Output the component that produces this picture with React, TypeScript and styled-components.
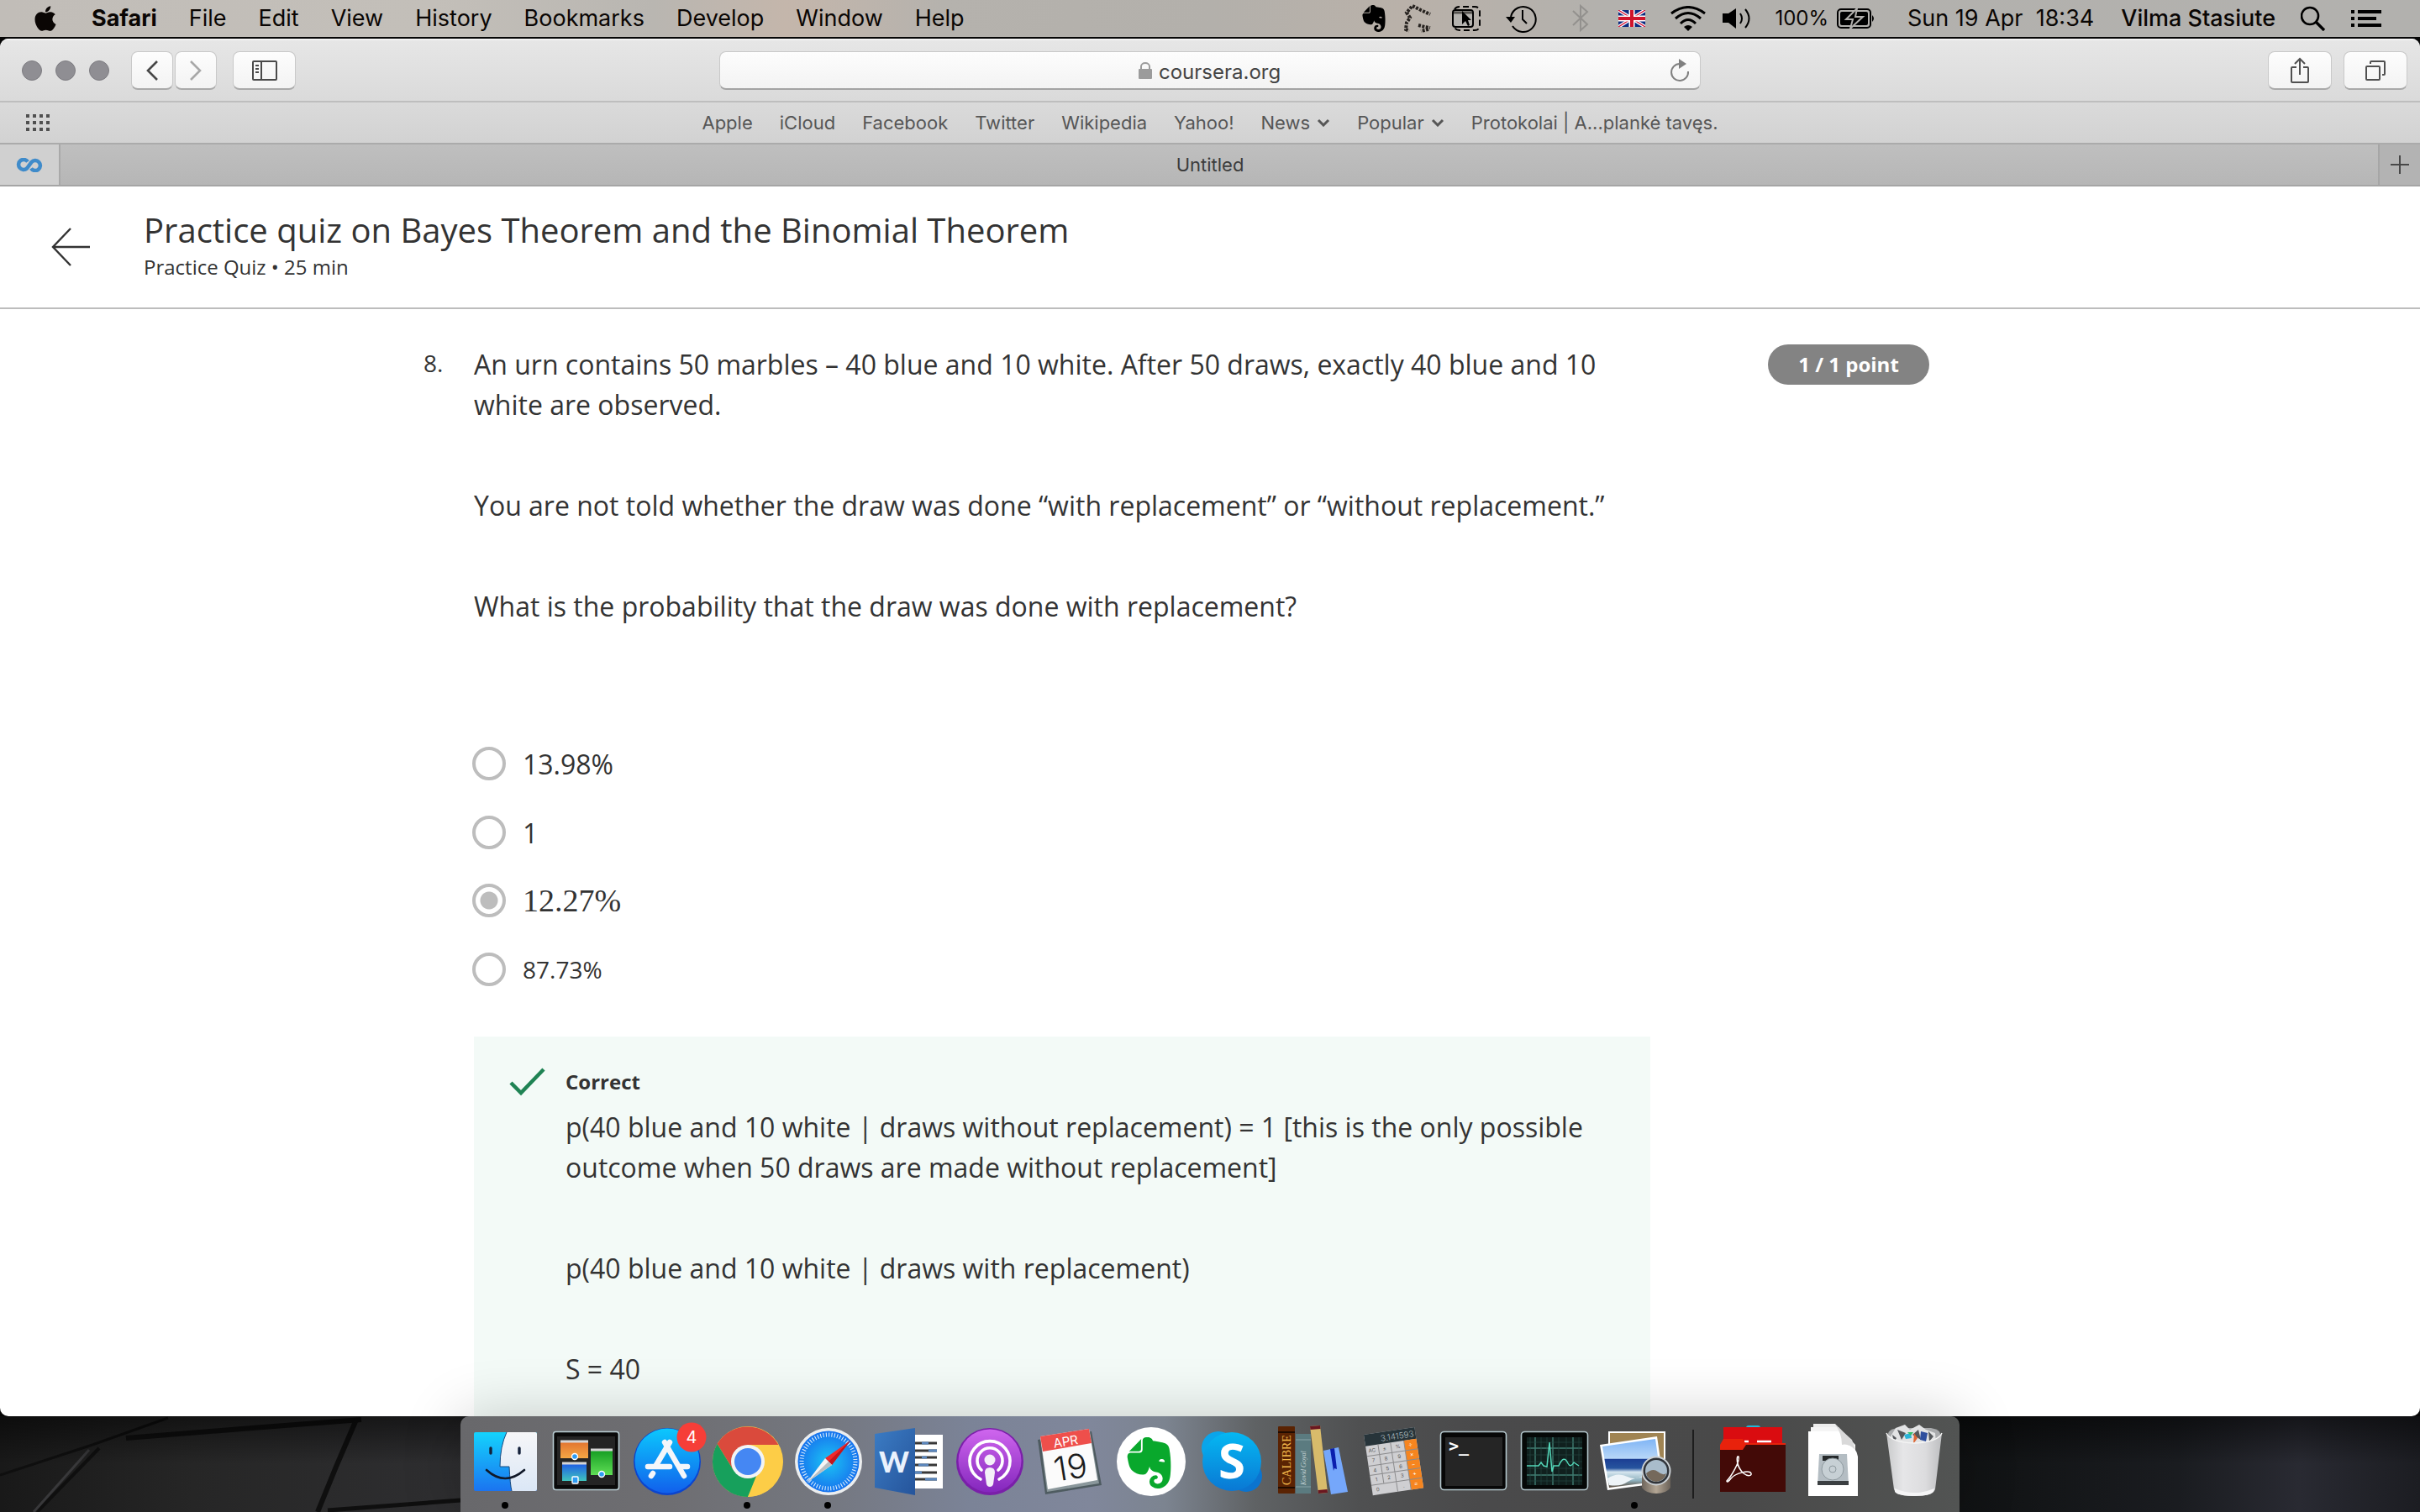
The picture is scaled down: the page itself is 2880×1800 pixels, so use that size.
import React from "react";
import styled, { createGlobalStyle } from "styled-components";
import { FaApple } from "react-icons/fa";
import { SiEvernote } from "react-icons/si";

const GlobalStyle = createGlobalStyle`
  * { box-sizing: border-box; }
  html, body, #root { height: 100%; }
  body { margin: 0; background: #0b0b0c; overflow: hidden; }
  button { font: inherit; color: inherit; padding: 0; margin: 0; border: 0; background: none; }
  h1, p, ol, ul { margin: 0; padding: 0; font-weight: 400; }
  a { color: inherit; text-decoration: none; }
  svg { display: block; flex: none; }
`;

const uiFont = `Inter, "Liberation Sans", sans-serif`;
const pageFont = `"Open Sans", "Noto Sans", sans-serif`;

const Desktop = styled.div`
  display: flex;
  flex-direction: column;
  height: 100vh;
  font-family: ${uiFont};
  background: #060606;
`;

/* ---------- menu bar ---------- */

const MenuBar = styled.header`
  display: flex;
  justify-content: space-between;
  align-items: center;
  flex: none;
  height: 44px;
  padding: 0 46px 0 37px;
  margin-bottom: 2px;
  font-size: 27px;
  line-height: 44px;
  color: #0a0604;
  background: linear-gradient(90deg, #c1bdb8 0%, #c3bfb9 18%, #b9b6b1 27%, #c4b6ab 32.5%, #b5b2ad 39%, #b3b0ab 50%, #b9b1a9 58%, #b3b1ad 66%, #b2b1ae 100%);
`;

const MenuGroup = styled.nav`
  display: flex;
  align-items: center;
`;

const AppMenus = styled(MenuGroup)`
  gap: 38px;
`;

const MenuItem = styled.button<{ $bold?: boolean }>`
  height: 44px;
  line-height: 44px;
  font-weight: ${(p) => (p.$bold ? 700 : 400)};
`;

const StatusItem = styled.button<{ $gap: number; $strong?: boolean }>`
  display: flex;
  align-items: center;
  gap: 10px;
  height: 44px;
  line-height: 44px;
  white-space: pre;
  margin-left: ${(p) => p.$gap}px;
  font-weight: ${(p) => (p.$strong ? 500 : 400)};
`;

const Charge = styled.span`
  font-size: 24px;
`;

/* ---------- browser window ---------- */

const Window = styled.main`
  display: flex;
  flex-direction: column;
  flex: 1;
  min-height: 0;
  overflow: hidden;
  border-radius: 10px;
  background: #fff;
`;

const Toolbar = styled.div`
  display: grid;
  grid-template-columns: 1fr 41% 1fr;
  align-items: center;
  flex: none;
  height: 76px;
  padding: 0 15px;
  border-top: 2px solid #f4f4f4;
  border-bottom: 2px solid #bebebe;
  background: linear-gradient(#e6e6e6, #dadada);
`;

const ToolbarSide = styled.div<{ $end?: boolean }>`
  display: flex;
  align-items: center;
  justify-content: ${(p) => (p.$end ? "flex-end" : "flex-start")};
  gap: ${(p) => (p.$end ? 14 : 19)}px;
`;

const Lights = styled.div`
  display: flex;
  gap: 16px;
  margin: 0 7px 0 11px;
`;

const Light = styled.button`
  width: 24px;
  height: 24px;
  border-radius: 50%;
  border: 1px solid #7d7c81;
  background: #8f8e93;
`;

const NavPair = styled.div`
  display: flex;
  gap: 2px;
`;

const ToolButton = styled.button<{ $w: number }>`
  display: flex;
  align-items: center;
  justify-content: center;
  width: ${(p) => p.$w}px;
  height: 46px;
  border-radius: 8px;
  border: 1px solid #c9c9c9;
  border-bottom: 2px solid #a9a9a9;
  background: linear-gradient(#fdfdfd, #f3f3f3);
`;

const AddressBar = styled.div`
  display: grid;
  grid-template-columns: 1fr auto 1fr;
  align-items: center;
  height: 46px;
  padding: 0 12px;
  border-radius: 8px;
  border: 1px solid #c9c9c9;
  border-bottom: 2px solid #a3a3a3;
  background: linear-gradient(#fdfdfd, #f3f3f3);
`;

const Address = styled.label`
  display: flex;
  align-items: center;
  grid-column: 2;
  gap: 8px;
`;

const AddressInput = styled.input`
  width: 146px;
  height: 36px;
  padding: 4px 0 0;
  border: 0;
  background: none;
  color: #444;
  font: 400 24px/32px ${uiFont};
  outline: 0;
`;

const Reload = styled.button`
  justify-self: end;
`;

const Bookmarks = styled.nav`
  display: grid;
  grid-template-columns: 1fr auto 1fr;
  align-items: center;
  flex: none;
  height: 50px;
  padding: 0 30px;
  border-bottom: 2px solid #ababab;
  background: linear-gradient(#dadada, #d2d2d2);
  color: #565656;
  font-size: 22px;
  line-height: 28px;
`;

const BookmarkList = styled.ul`
  display: flex;
  gap: 32px;
  list-style: none;
`;

const BookmarkLink = styled.a`
  display: flex;
  align-items: center;
  gap: 8px;
`;

const Tabs = styled.div`
  display: flex;
  flex: none;
  height: 50px;
  border-bottom: 2px solid #a5a5a5;
  background: linear-gradient(#bfbfbf, #b6b6b6);
  color: #3c3c3c;
  font-size: 22px;
`;

const PinnedTab = styled.button`
  display: flex;
  align-items: center;
  justify-content: center;
  width: 72px;
  border-right: 2px solid #a9a9a9;
  background: #d0d0d0;
`;

const ActiveTab = styled.button`
  flex: 1;
  padding-right: 22px;
  text-align: center;
`;

const NewTab = styled(PinnedTab)`
  width: 50px;
  border-right: 0;
  border-left: 2px solid #a6a6a6;
  background: #b3b3b3;
`;

/* ---------- quiz page ---------- */

const QuizHeader = styled.header`
  display: flex;
  align-items: center;
  flex: none;
  gap: 64px;
  height: 146px;
  padding: 0 61px;
  border-bottom: 2px solid #bdbdbd;
  color: #333;
  font-family: ${pageFont};
`;

const QuizHeading = styled.div`
  padding-bottom: 4px;
`;

const QuizTitle = styled.h1`
  font-size: 40px;
  line-height: 52px;
`;

const QuizMeta = styled.p`
  font-size: 24px;
  line-height: 36px;
`;

const Scroll = styled.section`
  display: flex;
  justify-content: center;
  flex: 1;
  min-height: 0;
  overflow: hidden;
  padding: 42px 80px 0 0;
  color: #333;
  font-family: ${pageFont};
  font-size: 32px;
  line-height: 48px;
`;

const QuizColumn = styled.div`
  display: flex;
  align-items: flex-start;
  width: 1792px;
`;

const QuestionNumber = styled.div`
  width: 60px;
  font-size: 28px;
  line-height: 44px;
`;

const Question = styled.div`
  width: 1400px;
  flex: none;
`;

const Paragraphs = styled.div`
  display: flex;
  flex-direction: column;
  gap: 72px;
`;

const Options = styled.ul`
  display: flex;
  flex-direction: column;
  gap: 34px;
  padding: 140px 0 54px;
  list-style: none;
`;

const Option = styled.label<{ $kind?: "math" | "small" }>`
  display: flex;
  align-items: center;
  gap: 20px;
  height: 48px;
  margin-left: -2px;
  font-family: ${(p) => (p.$kind === "math" ? `"Liberation Serif", serif` : pageFont)};
  font-size: ${(p) => (p.$kind === "math" ? 38 : p.$kind === "small" ? 28 : 32)}px;
  line-height: ${(p) => (p.$kind ? 44 : 48)}px;
  align-items: ${(p) => (p.$kind ? "flex-start" : "center")};
`;

const Radio = styled.input`
  appearance: none;
  width: 40px;
  height: 40px;
  margin: 2px 0 4px;
  border: 4px solid #bdbdbd;
  border-radius: 50%;
  background: #fff;
  &:checked {
    background: radial-gradient(circle, #bdbdbd 10px, #fff 11px);
  }
`;

const Feedback = styled.div`
  display: flex;
  gap: 24px;
  padding: 36px 40px 0 42px;
  min-height: 600px;
  background: #f3faf7;
`;

const FeedbackBody = styled.div`
  flex: 1;
`;

const Verdict = styled.div`
  font-size: 24px;
  font-weight: 700;
  line-height: 36px;
  margin-bottom: 12px;
`;

const Score = styled.div`
  width: 192px;
  height: 48px;
  margin-left: auto;
  border-radius: 24px;
  background: #838383;
  color: #fff;
  font-size: 24px;
  font-weight: 700;
  line-height: 48px;
  text-align: center;
`;

/* ---------- dock ---------- */

const DockArea = styled.footer`
  position: relative;
  display: flex;
  justify-content: center;
  flex: none;
  height: 114px;
`;

const Wall = styled.svg`
  position: absolute;
  inset: 0;
  width: 100%;
  height: 100%;
`;

const Dock = styled.div`
  position: relative;
  display: flex;
  align-items: stretch;
  padding: 0 6px 0 5px;
  border-radius: 10px 10px 0 0;
  box-shadow: 0 0 70px rgba(0, 0, 0, 0.2);
  background: linear-gradient(90deg, #68686b 0%, #6e6e72 14%, #74777f 24%, #7b8397 34%, #80879b 42%, #7c8490 47%, #5f6264 53%, #4f5051 60%, #4a4a4b 68%, #494949 85%, #525453 100%);
`;

const DockItem = styled.button`
  display: flex;
  flex-direction: column;
  align-items: center;
  width: 96px;
  padding-top: 6px;
`;

const RunningDot = styled.span`
  width: 8px;
  height: 8px;
  border-radius: 50%;
  background: #000;
`;

const DockDivider = styled.div`
  width: 45px;
  padding: 16px 21px;
  &::before {
    content: "";
    display: block;
    width: 2px;
    height: 82px;
    background: #1d1d1d;
  }
`;

/* ---------- status icons ---------- */

const PixelG = () => (
  <svg width="34" height="34" viewBox="0 0 34 34">
    <g fill="none" stroke="#26221f" strokeWidth="4" strokeDasharray="3 1.500">
      <path d="M10 2L20 7L31 12" />
      <path d="M9 3L3 10L7 16L3 22L2 30L6 32" />
      <path d="M17 25L25 27L31 28" />
      <path d="M29 30L20 32" />
    </g>
  </svg>
);

const CaptureIcon = () => (
  <svg width="36" height="32" viewBox="0 0 36 32">
    <path d="M4 5Q6 2 10 2H28Q34 2 34 8V24Q34 30 28 30H10Q6 30 4 27" fill="none" stroke="#000" strokeWidth="2" strokeDasharray="7 4" />
    <rect x="2" y="6" width="24" height="20" rx="3" fill="#b5b3af" stroke="#000" strokeWidth="2" />
    <path d="M3 9H25" stroke="#55534f" strokeWidth="3" />
    <path d="M13 7V23L17 19L20 25L22 24L20 18H24Z" fill="#000" />
  </svg>
);

const TimeMachine = () => (
  <svg width="38" height="34" viewBox="0 0 38 34" fill="none" stroke="#000" strokeWidth="2">
    <path d="M7 15A15 15 0 1 1 9 26" />
    <path d="M21 7V18L26 23" />
    <path d="M1 15H12L7 22Z" fill="#000" stroke="none" />
  </svg>
);

const BluetoothIcon = () => (
  <svg width="20" height="34" viewBox="0 0 20 34" fill="none" stroke="#93918e" strokeWidth="2">
    <path d="M1 8L18 24L10 31V2L18 9L1 25" />
  </svg>
);

const UkFlag = () => (
  <svg width="32" height="20" viewBox="0 0 32 20">
    <rect width="32" height="20" fill="#0b2b80" />
    <path d="M0 0L32 20M32 0L0 20" stroke="#fff" strokeWidth="4" />
    <path d="M0 0L32 20M32 0L0 20" stroke="#d7183a" strokeWidth="1.4" />
    <path d="M16 0V20M0 10H32" stroke="#fff" strokeWidth="7" />
    <path d="M16 0V20M0 10H32" stroke="#d0142c" strokeWidth="4" />
  </svg>
);

const WifiIcon = () => (
  <svg width="42" height="30" viewBox="0 0 42 30" fill="none" stroke="#000" strokeWidth="3">
    <path d="M1 9Q21 -6 41 9" />
    <path d="M6 15Q21 2 36 15" />
    <path d="M12 21Q21 12 30 21" />
    <path d="M21 30L16 25Q21 21 26 25Z" fill="#000" stroke="none" />
  </svg>
);

const SpeakerIcon = () => (
  <svg width="34" height="26" viewBox="0 0 34 26" fill="none" stroke="#000" strokeWidth="2">
    <path d="M0 7H7L16 1V25L7 18H0Z" fill="#000" stroke="none" />
    <path d="M21 7Q25 13 21 19M27 2Q36 13 27 24" />
  </svg>
);

const BatteryIcon = () => (
  <svg width="46" height="24" viewBox="0 0 46 24">
    <rect x="1" y="1" width="39" height="22" rx="4" fill="none" stroke="#000" strokeWidth="2" />
    <rect x="4" y="4" width="33" height="16" rx="2" fill="#000" />
    <path d="M42 8Q46 12 42 16Z" fill="#000" />
    <path d="M24 0L11 13H19L16 24L31 10H22Z" fill="#000" stroke="#b2b0ad" strokeWidth="2" />
  </svg>
);

const SearchIcon = () => (
  <svg width="30" height="30" viewBox="0 0 30 30" fill="none" stroke="#000" strokeWidth="2.6">
    <circle cx="11" cy="12" r="10" />
    <path d="M18 19L28 29" strokeWidth="3.4" />
  </svg>
);

const ListIcon = () => (
  <svg width="36" height="20" viewBox="0 0 36 20">
    <path d="M0 2H4M8 2H36M0 10H4M8 10H30M0 18H4M8 18H36" stroke="#000" strokeWidth="4" />
  </svg>
);

/* ---------- browser icons ---------- */

const Chevron = ({ flip }: { flip?: boolean }) => (
  <svg width="14" height="24" viewBox="0 0 14 24" fill="none" stroke={flip ? "#a8a8a8" : "#474747"} strokeWidth="2.6">
    <path d={flip ? "M1 1L12 12L1 23" : "M13 1L2 12L13 23"} />
  </svg>
);

const SidebarIcon = () => (
  <svg width="30" height="24" viewBox="0 0 30 24" fill="none" stroke="#4a4a4a" strokeWidth="2">
    <rect x="1" y="1" width="28" height="22" rx="1" />
    <path d="M11 1V23M4 6H8M4 10H8M4 14H8" />
  </svg>
);

const LockIcon = () => (
  <svg width="16" height="20" viewBox="0 0 16 20">
    <path d="M3 9V5A5 4 0 0 1 13 5V9" fill="none" stroke="#9b9b9b" strokeWidth="2" />
    <rect x="0" y="8" width="16" height="12" rx="1" fill="#9b9b9b" />
  </svg>
);

const ReloadIcon = () => (
  <svg width="24" height="28" viewBox="0 0 24 28">
    <path d="M22 15A10 10 0 1 1 12 6" fill="none" stroke="#808080" strokeWidth="2" />
    <path d="M11 0L20 6L11 12Z" fill="#808080" />
  </svg>
);

const ShareIcon = () => (
  <svg width="24" height="32" viewBox="0 0 24 32" fill="none" stroke="#505050" strokeWidth="2">
    <path d="M8 12H3Q2 12 2 13V29Q2 30 3 30H21Q22 30 22 29V13Q22 12 21 12H16" />
    <path d="M12 21V3M6 8L12 2L18 8" />
  </svg>
);

const WindowsIcon = () => (
  <svg width="26" height="26" viewBox="0 0 26 26" fill="none" stroke="#505050" strokeWidth="2">
    <rect x="2" y="8" width="16" height="16" rx="1" />
    <path d="M7 5V3Q7 2 8 2H23Q24 2 24 3V17Q24 18 23 18H21" />
  </svg>
);

const GridIcon = () => (
  <svg width="30" height="20" viewBox="0 0 30 20">
    <path d="M1 2H30M1 10H30M1 18H30" stroke="#505050" strokeWidth="4" strokeDasharray="4 4" />
  </svg>
);

const SmallChevron = () => (
  <svg width="16" height="10" viewBox="0 0 16 10" fill="none" stroke="#565656" strokeWidth="3">
    <path d="M2 2L8 8L14 2" />
  </svg>
);

const CourseraMark = () => (
  <svg width="32" height="17" viewBox="0 0 32 17" fill="none" stroke="#3f8bca" strokeWidth="4.500">
    <path d="M14 4.500A6 6 0 1 0 13 12.500L18.500 5A6 6 0 1 1 18 12.500" />
  </svg>
);

const PlusIcon = () => (
  <svg width="22" height="22" viewBox="0 0 22 22">
    <path d="M11 0V22M0 11H22" stroke="#484848" strokeWidth="2" />
  </svg>
);

const BackArrow = () => (
  <svg width="46" height="48" viewBox="0 0 46 48" fill="none" stroke="#333" strokeWidth="2.4">
    <path d="M46 24H2M23 2L2 24L23 46" />
  </svg>
);

const CheckIcon = () => (
  <svg width="43" height="36" viewBox="0 0 43 36" fill="none" stroke="#1f8354" strokeWidth="4.5">
    <path d="M2 19L14 31L41 3" />
  </svg>
);

/* ---------- dock icons, each on a 96 unit square ---------- */

const Icon = ({ children }: { children: React.ReactNode }) => (
  <svg width="96" height="96" viewBox="0 0 96 96">
    {children}
  </svg>
);

const FinderIcon = () => (
  <Icon>
    <defs>
      <linearGradient id="finderBlue" x2="0" y2="1">
        <stop offset="0" stopColor="#14d3fd" />
        <stop offset="1" stopColor="#1b74f0" />
      </linearGradient>
      <linearGradient id="finderWhite" x2="0" y2="1">
        <stop offset="0" stopColor="#f6f6f8" />
        <stop offset="1" stopColor="#dbe7f6" />
      </linearGradient>
    </defs>
    <rect x="11" y="13" width="75" height="70" rx="2" fill="url(#finderBlue)" />
    <path d="M50 13H84Q86 13 86 15V81Q86 83 84 83H56Q54 75 53 54H42Q42 30 50 13Z" fill="url(#finderWhite)" />
    <path d="M50 13Q42 30 42 54H53Q54 75 56 83" fill="none" stroke="#164a80" strokeWidth="1" />
    <path d="M31 32V38M65 32V38" stroke="#14213a" strokeWidth="3.4" strokeLinecap="round" />
    <path d="M26 58Q48 78 71 58" fill="none" stroke="#101828" strokeWidth="2.6" strokeLinecap="round" />
  </Icon>
);

const MissionIcon = () => (
  <Icon>
    <defs>
      <linearGradient id="mOrange" x2="0" y2="1"><stop stopColor="#e0702e" /><stop offset="1" stopColor="#f5a745" /></linearGradient>
      <linearGradient id="mBlue" x2="0" y2="1"><stop stopColor="#1d55e8" /><stop offset="1" stopColor="#3fc4bd" /></linearGradient>
      <linearGradient id="mGreen" x2="0" y2="1"><stop stopColor="#119a20" /><stop offset="1" stopColor="#5fdd55" /></linearGradient>
    </defs>
    <rect x="9.500" y="12.500" width="78" height="69" rx="3" fill="#0a0a0a" stroke="#b9cdd3" strokeWidth="1.6" />
    <rect x="14" y="18" width="69" height="58" fill="#242424" />
    <rect x="18" y="23" width="33" height="21" fill="url(#mOrange)" />
    <rect x="20" y="49" width="29" height="22" fill="url(#mBlue)" />
    <rect x="54" y="33" width="26" height="31" fill="url(#mGreen)" />
    <path d="M18 24H51M20 50H49M54 34H80" stroke="#d6d6d6" strokeWidth="3" />
    <g fill="#2f9cf4" stroke="#fff" strokeWidth="1.4">
      <circle cx="35" cy="42" r="3.500" />
      <circle cx="67" cy="63" r="3.500" />
      <rect x="32" y="66" width="7" height="8" rx="1" />
    </g>
  </Icon>
);

const AppStoreIcon = () => (
  <Icon>
    <defs>
      <linearGradient id="store" x2="0" y2="1"><stop stopColor="#0cc8fd" /><stop offset="1" stopColor="#1160ec" /></linearGradient>
    </defs>
    <circle cx="49" cy="48" r="40" fill="#0b45cf" />
    <circle cx="49" cy="47" r="38.500" fill="url(#store)" />
    <g stroke="#f4f6fa" strokeWidth="6.500" strokeLinecap="round">
      <path d="M52 25L36 52" />
      <path d="M46 25L69 65" />
      <path d="M26 54H52M64 54H73" />
      <path d="M32 62L30 65" />
    </g>
    <circle cx="78" cy="19" r="17.500" fill="#f63e38" />
    <text x="78" y="26" textAnchor="middle" fill="#fff" fontFamily="Inter" fontSize="20">4</text>
  </Icon>
);

const ChromeIcon = () => (
  <Icon>
    <circle cx="49" cy="48" r="42" fill="#fdcd47" />
    <path d="M49 28H85.400A42 42 0 0 0 12.600 27L31.700 58Z" fill="#da4a3c" />
    <path d="M12.600 27A42 42 0 0 0 49 90L66.300 58L49 68L31.700 58Z" fill="#17a05c" />
    <path d="M49 48H66L49 90A42 42 0 0 0 85.400 28H49Z" fill="#fdcd47" />
    <circle cx="49" cy="48" r="20" fill="#f3f4f4" />
    <circle cx="49" cy="48" r="16" fill="#4587f3" />
  </Icon>
);

const SafariIcon = () => (
  <Icon>
    <defs>
      <radialGradient id="saf"><stop stopColor="#1bc5f4" /><stop offset="1" stopColor="#1773ee" /></radialGradient>
    </defs>
    <circle cx="49" cy="48" r="40" fill="#eceeef" />
    <circle cx="49" cy="48" r="36.500" fill="url(#saf)" />
    <circle cx="49" cy="48" r="32" fill="none" stroke="#e8f3fc" strokeWidth="5" strokeDasharray="1 2.350" />
    <path d="M75 23L53 52L45 44Z" fill="#f0292b" />
    <path d="M75 23L53 52L49 48Z" fill="#c4161c" />
    <path d="M23 73L53 52L45 44Z" fill="#f5f5f5" />
    <path d="M23 73L53 52L49 48Z" fill="#b9bec2" />
  </Icon>
);

const WordIcon = () => (
  <Icon>
    <defs>
      <linearGradient id="word" x2="1" y2="1"><stop stopColor="#3b7cc4" /><stop offset="1" stopColor="#25549b" /></linearGradient>
    </defs>
    <rect x="50" y="16" width="39" height="64" fill="#fff" />
    <path d="M56 26H82M56 35H82M56 43H82M56 52H82M56 61H82M56 69H82" stroke="#383838" strokeWidth="3" />
    <path d="M64 26H72M72 35H82M64 43H70M60 52H72M56 61H64M68 69H82" stroke="#5c87bd" strokeWidth="3" />
    <path d="M8 15L56 8V88L8 79Z" fill="url(#word)" />
    <text x="31" y="61" textAnchor="middle" fill="#eaf2fd" fontFamily="Lato" fontWeight="900" fontSize="34">W</text>
  </Icon>
);

const PodcastsIcon = () => (
  <Icon>
    <defs>
      <linearGradient id="pod" x2="0" y2="1"><stop stopColor="#cf66ee" /><stop offset="1" stopColor="#8427bd" /></linearGradient>
    </defs>
    <circle cx="49" cy="48" r="40" fill="#7a1fa9" />
    <circle cx="49" cy="47" r="37.500" fill="url(#pod)" />
    <g fill="none" stroke="#fff" strokeWidth="3.600" strokeLinecap="round">
      <path d="M38 69A24 24 0 1 1 60 69" />
      <path d="M39 58A15 15 0 1 1 59 58" />
    </g>
    <circle cx="49" cy="46" r="6.500" fill="#f4f0f8" />
    <path d="M43 61Q43 55 49 55Q55 55 55 61L53 75Q52 78 49 78Q46 78 45 75Z" fill="#f4f0f8" />
  </Icon>
);

const CalendarIcon = () => (
  <Icon>
    <path d="M10 22L74 12L86 76L19 87Z" fill="#4e5b60" />
    <path d="M13 20L72 12L83 74L21 84Z" fill="#8a979b" />
    <path d="M13 18L71 9L81 70L22 81Z" fill="#fbfbfb" />
    <path d="M13 18L71 9L74 26L16 36Z" fill="#ee4f4b" />
    <g transform="rotate(-9 48 48)" textAnchor="middle" fontFamily="Inter">
      <text x="47" y="29" fill="#fff" fontSize="15">APR</text>
      <text x="48" y="69" fill="#1c1c1c" fontSize="40" fontWeight="300">19</text>
    </g>
  </Icon>
);

const EvernoteIcon = () => (
  <Icon>
    <circle cx="49" cy="48" r="41" fill="#fff" />
    <g transform="translate(16 19)"><SiEvernote size={61} color="#09a82c" /></g>
  </Icon>
);

const SkypeIcon = () => (
  <Icon>
    <defs>
      <linearGradient id="sky" x2="0" y2="1"><stop stopColor="#05b8f2" /><stop offset="1" stopColor="#0a78d4" /></linearGradient>
    </defs>
    <circle cx="33" cy="32" r="20" fill="#0aa5ea" />
    <circle cx="66" cy="65" r="19" fill="#0b74cf" />
    <circle cx="49" cy="48" r="35" fill="url(#sky)" />
    <text x="49" y="68" textAnchor="middle" fill="#fff" fontFamily="Open Sans" fontWeight="700" fontSize="58">S</text>
  </Icon>
);

const CalibreIcon = () => (
  <Icon>
    <rect x="8" y="6" width="20" height="80" rx="1" fill="#5a2303" />
    <path d="M8 13H28M8 79H28" stroke="#200b00" strokeWidth="2" />
    <text transform="translate(23 76) rotate(-90)" fill="#f0b64a" fontFamily="Liberation Serif" fontSize="14">CALIBRE</text>
    <rect x="29" y="15" width="18" height="71" fill="#5b7b80" />
    <path d="M29 22H47M29 78H47" stroke="#8aa5a8" strokeWidth="1" />
    <text transform="translate(41 76) rotate(-90)" fill="#c5d4d5" fontFamily="Liberation Serif" fontStyle="italic" fontSize="8">Kovid Goyal</text>
    <path d="M46 6L58 5L67 85L56 86Z" fill="#d8bb6b" />
    <path d="M46 6L58 5L58.500 9L46.500 10ZM55.500 82L66.500 81L67 85L56 86Z" fill="#6a1720" />
    <path d="M62 35L80 31L91 84L71 87Z" fill="#75a7fb" />
    <path d="M70 33L75 32L78 57L75 56L74 59Z" fill="#0b1fae" />
  </Icon>
);

const CalculatorIcon = () => (
  <Icon>
    <g transform="rotate(-8.500 50 47)">
      <rect x="19" y="11" width="61" height="73" fill="#cfcfd2" />
      <rect x="19" y="11" width="61" height="14" fill="#27343a" />
      <rect x="65" y="25" width="15" height="59" fill="#f6851f" />
      <text x="78" y="22" textAnchor="end" fill="#a9b8bc" fontFamily="Inter" fontWeight="300" fontSize="10">3.141593</text>
      <path d="M19 37H80M19 49H80M19 60H80M19 72H80M34 25V72M49 25V84M65 25V84" stroke="#8b8b8d" strokeWidth="1" />
      <g fill="#555" fontFamily="Inter" fontSize="6" textAnchor="middle">
        <text x="26" y="33">AC</text><text x="41" y="33">±</text><text x="57" y="33">%</text>
        <text x="26" y="45">7</text><text x="41" y="45">8</text><text x="57" y="45">9</text>
        <text x="26" y="57">4</text><text x="41" y="57">5</text><text x="57" y="57">6</text>
        <text x="26" y="68">1</text><text x="41" y="68">2</text><text x="57" y="68">3</text>
        <text x="26" y="80">0</text><text x="57" y="80">.</text>
      </g>
      <g fill="#fff" fontFamily="Inter" fontSize="7" textAnchor="middle">
        <text x="72" y="33">÷</text><text x="72" y="45">×</text><text x="72" y="57">−</text><text x="72" y="68">+</text><text x="72" y="80">=</text>
      </g>
    </g>
  </Icon>
);

const TerminalIcon = () => (
  <Icon>
    <rect x="9.500" y="12.500" width="78" height="69" rx="4" fill="#070707" stroke="#b3c6cc" strokeWidth="1.600" />
    <rect x="15" y="19" width="68" height="58" fill="#252525" />
    <text x="19" y="36" fill="#fff" fontFamily="DejaVu Sans Mono" fontWeight="700" fontSize="20">&gt;_</text>
  </Icon>
);

const ActivityIcon = () => (
  <Icon>
    <rect x="9.500" y="12.500" width="79" height="69" rx="4" fill="#050807" stroke="#b3c6cc" strokeWidth="1.600" />
    <rect x="16" y="19" width="66" height="57" fill="#10201e" />
    <path d="M16 32H82M16 64H82M26 19V76M47 19V76M71 19V76" stroke="#3f7c71" strokeWidth="1.400" />
    <path d="M16 25H82M16 40H82M16 48H82M16 56H82M16 71H82M20 19V76M33 19V76M40 19V76M54 19V76M63 19V76M78 19V76" stroke="#23463f" strokeWidth="0.700" />
    <path d="M16 53H30L33 49L36 53L40 54L43 25L46 60L48 53H54Q60 39 65 50Q68 56 72 49L78 53" fill="none" stroke="#53d6b8" strokeWidth="1.500" />
  </Icon>
);

const PreviewIcon = () => (
  <Icon>
    <defs>
      <linearGradient id="sea" x2="0" y2="1">
        <stop stopColor="#7fb4f5" /><stop offset="0.400" stopColor="#b8d7f8" /><stop offset="0.420" stopColor="#1c3f94" />
        <stop offset="0.600" stopColor="#26549e" /><stop offset="0.680" stopColor="#d5e5ee" /><stop offset="0.850" stopColor="#8fb2c0" /><stop offset="1" stopColor="#5b4a3b" />
      </linearGradient>
      <linearGradient id="loupe"><stop stopColor="#6e655c" /><stop offset="0.500" stopColor="#b3a695" /><stop offset="1" stopColor="#6b6259" /></linearGradient>
    </defs>
    <rect x="18" y="13" width="66" height="50" fill="#a08453" stroke="#fff" strokeWidth="2" />
    <path d="M7 28L75 18L83 73L16 82Z" fill="#fff" />
    <path d="M10 30L73 21L80 71L18 79Z" fill="url(#sea)" />
    <path d="M16 68Q28 60 40 66T64 60L66 66Q48 66 40 72T18 76Z" fill="#eef4f8" />
    <path d="M57 62V79Q62 86 74 86Q86 86 91 79V62Z" fill="url(#loupe)" />
    <circle cx="74" cy="59" r="16.500" fill="#30343a" stroke="#ccd1d5" strokeWidth="2" />
    <circle cx="74" cy="59" r="13" fill="#a9bccb" />
    <path d="M62 62Q70 55 76 60T86 62Q84 71 74 72Q64 71 62 62Z" fill="#75695b" />
  </Icon>
);

const AcrobatFolderIcon = () => (
  <Icon>
    <rect x="40" y="5" width="17" height="6" rx="3" fill="#25b6d6" />
    <rect x="13" y="7" width="70" height="30" fill="#da0c10" />
    <path d="M38 24H43M53 24H70" stroke="#fff" strokeWidth="2.500" />
    <path d="M9 28L13 21H36L39 26H87V40H9Z" fill="#e8220c" />
    <path d="M9 34H36L40 28H87V84H9Z" fill="#430a07" />
    <path d="M17 71C22 66 33 48 31 42C28 40 28 54 37 62C42 66 47 65 46 62C44 58 28 61 22 68C19 72 17 73 17 71Z" fill="none" stroke="#fff" strokeWidth="1.500" />
  </Icon>
);

const DocumentsIcon = () => (
  <Icon>
    <path d="M24 3H50L70 24V84H24Z" fill="#ededed" />
    <path d="M21 7H54L74 28V86H21Z" fill="#f5f5f5" />
    <path d="M18 12H54Q60 14 64 28Q76 32 77 42V89H18Z" fill="#fff" />
    <path d="M50 4Q58 14 58 28Q66 26 74 34L70 22Z" fill="#d9d9d9" />
    <path d="M31 39H64L66 76H29Z" fill="#b4bdc3" />
    <rect x="35" y="41" width="19" height="6" fill="#25292b" />
    <circle cx="47" cy="57" r="13" fill="#c7d0d5" stroke="#8e999f" />
    <circle cx="47" cy="57" r="4" fill="none" stroke="#8e999f" />
    <path d="M29 71H66V76H29Z" fill="#3b3f42" />
  </Icon>
);

const TrashIcon = () => (
  <Icon>
    <defs>
      <linearGradient id="bin"><stop stopColor="#c9cacb" /><stop offset="0.300" stopColor="#e6e6e8" /><stop offset="0.700" stopColor="#dcdcde" /><stop offset="1" stopColor="#bdbec0" /></linearGradient>
    </defs>
    <path d="M17 15Q17 10 28 8H68Q79 10 79 15L76 26H20Z" fill="#a9abad" />
    <path d="M20 18L26 8L37 4L43 10L54 4L62 10L73 14L74 26H22Z" fill="#e2e3e4" />
    <path d="M28 10L38 14L33 22ZM46 16L53 10L56 22ZM65 12L71 18L66 24ZM22 16L27 20L24 25Z" fill="#55585c" />
    <path d="M36 16L44 14L45 20L38 21Z" fill="#2bb3d8" />
    <path d="M40 13L47 13L44 17Z" fill="#35c06c" />
    <path d="M56 12L64 14L62 24L55 22Z" fill="#2f4f9e" />
    <path d="M48 14L52 20L47 27Z" fill="#dd6633" />
    <path d="M15 14Q20 25 48 26Q76 25 81 14L73 81Q71 89 48 89Q26 89 24 81Z" fill="url(#bin)" />
    <path d="M15 14Q20 25 48 26Q76 25 81 14" fill="none" stroke="#f5f5f5" strokeWidth="1.500" />
    <path d="M25 80Q48 90 72 80L71 84Q66 89 48 89Q29 89 25 84Z" fill="#f5f5f6" />
  </Icon>
);

type DockApp = { name: string; icon: React.ReactNode; running?: boolean };

const apps: DockApp[] = [
  { name: "Finder", icon: <FinderIcon />, running: true },
  { name: "Mission Control", icon: <MissionIcon /> },
  { name: "App Store", icon: <AppStoreIcon /> },
  { name: "Chrome", icon: <ChromeIcon />, running: true },
  { name: "Safari", icon: <SafariIcon />, running: true },
  { name: "Word", icon: <WordIcon /> },
  { name: "Podcasts", icon: <PodcastsIcon /> },
  { name: "Calendar", icon: <CalendarIcon /> },
  { name: "Evernote", icon: <EvernoteIcon /> },
  { name: "Skype", icon: <SkypeIcon /> },
  { name: "Calibre", icon: <CalibreIcon /> },
  { name: "Calculator", icon: <CalculatorIcon /> },
  { name: "Terminal", icon: <TerminalIcon /> },
  { name: "Activity Monitor", icon: <ActivityIcon /> },
  { name: "Preview", icon: <PreviewIcon />, running: true },
];

const places: DockApp[] = [
  { name: "Acrobat", icon: <AcrobatFolderIcon /> },
  { name: "Documents", icon: <DocumentsIcon /> },
  { name: "Trash", icon: <TrashIcon /> },
];

const menus = ["File", "Edit", "View", "History", "Bookmarks", "Develop", "Window", "Help"];

const bookmarks: { label: string; folder?: boolean }[] = [
  { label: "Apple" },
  { label: "iCloud" },
  { label: "Facebook" },
  { label: "Twitter" },
  { label: "Wikipedia" },
  { label: "Yahoo!" },
  { label: "News", folder: true },
  { label: "Popular", folder: true },
  { label: "Protokolai | A...plankė tavęs." },
];

const options: { label: string; kind?: "math" | "small"; checked?: boolean }[] = [
  { label: "13.98%" },
  { label: "1" },
  { label: "12.27%", kind: "math", checked: true },
  { label: "87.73%", kind: "small" },
];

const renderApp = (app: DockApp) => (
  <DockItem key={app.name} aria-label={app.name}>
    {app.icon}
    {app.running && <RunningDot />}
  </DockItem>
);

export default function App() {
  return (
    <>
      <GlobalStyle />
      <Desktop>
        <MenuBar>
          <AppMenus>
            <MenuItem aria-label="Apple menu"><FaApple size={34} color="#0a0604" /></MenuItem>
            <MenuItem $bold>Safari</MenuItem>
            {menus.map((m) => <MenuItem key={m}>{m}</MenuItem>)}
          </AppMenus>
          <MenuGroup>
            <StatusItem $gap={0} aria-label="Evernote"><SiEvernote size={32} color="#000" /></StatusItem>
            <StatusItem $gap={20} aria-label="Grammar"><PixelG /></StatusItem>
            <StatusItem $gap={22} aria-label="Capture"><CaptureIcon /></StatusItem>
            <StatusItem $gap={28} aria-label="Time Machine"><TimeMachine /></StatusItem>
            <StatusItem $gap={42} aria-label="Bluetooth"><BluetoothIcon /></StatusItem>
            <StatusItem $gap={35} aria-label="Keyboard"><UkFlag /></StatusItem>
            <StatusItem $gap={30} aria-label="Wi-Fi"><WifiIcon /></StatusItem>
            <StatusItem $gap={20} aria-label="Volume"><SpeakerIcon /></StatusItem>
            <StatusItem $gap={28}><Charge>100%</Charge><BatteryIcon /></StatusItem>
            <StatusItem $gap={38}>{"Sun 19 Apr  18:34"}</StatusItem>
            <StatusItem $gap={32} $strong>Vilma Stasiute</StatusItem>
            <StatusItem $gap={30} aria-label="Search"><SearchIcon /></StatusItem>
            <StatusItem $gap={30} aria-label="Notifications"><ListIcon /></StatusItem>
          </MenuGroup>
        </MenuBar>

        <Window>
          <Toolbar>
            <ToolbarSide>
              <Lights>
                <Light aria-label="Close" />
                <Light aria-label="Minimise" />
                <Light aria-label="Zoom" />
              </Lights>
              <NavPair>
                <ToolButton $w={50} aria-label="Back"><Chevron /></ToolButton>
                <ToolButton $w={50} aria-label="Forward"><Chevron flip /></ToolButton>
              </NavPair>
              <ToolButton $w={75} aria-label="Sidebar"><SidebarIcon /></ToolButton>
            </ToolbarSide>
            <AddressBar>
              <Address>
                <LockIcon />
                <AddressInput aria-label="Address" defaultValue="coursera.org" />
              </Address>
              <Reload aria-label="Reload"><ReloadIcon /></Reload>
            </AddressBar>
            <ToolbarSide $end>
              <ToolButton $w={76} aria-label="Share"><ShareIcon /></ToolButton>
              <ToolButton $w={76} aria-label="Tabs"><WindowsIcon /></ToolButton>
            </ToolbarSide>
          </Toolbar>

          <Bookmarks>
            <GridIcon />
            <BookmarkList>
              {bookmarks.map((b) => (
                <li key={b.label}>
                  <BookmarkLink href="#">
                    {b.label}
                    {b.folder && <SmallChevron />}
                  </BookmarkLink>
                </li>
              ))}
            </BookmarkList>
          </Bookmarks>

          <Tabs>
            <PinnedTab aria-label="Coursera"><CourseraMark /></PinnedTab>
            <ActiveTab>Untitled</ActiveTab>
            <NewTab aria-label="New tab"><PlusIcon /></NewTab>
          </Tabs>

          <QuizHeader>
            <button aria-label="Go back"><BackArrow /></button>
            <QuizHeading>
              <QuizTitle>Practice quiz on Bayes Theorem and the Binomial Theorem</QuizTitle>
              <QuizMeta>Practice Quiz • 25 min</QuizMeta>
            </QuizHeading>
          </QuizHeader>

          <Scroll>
            <QuizColumn>
              <QuestionNumber>8.</QuestionNumber>
              <Question>
                <Paragraphs>
                  <p>An urn contains 50 marbles – 40 blue and 10 white. After 50 draws, exactly 40 blue and 10 white are observed.</p>
                  <p>You are not told whether the draw was done “with replacement” or “without replacement.”</p>
                  <p>What is the probability that the draw was done with replacement?</p>
                </Paragraphs>
                <Options>
                  {options.map((o) => (
                    <li key={o.label}>
                      <Option $kind={o.kind}>
                        <Radio type="radio" name="answer" defaultChecked={o.checked} />
                        {o.label}
                      </Option>
                    </li>
                  ))}
                </Options>
                <Feedback>
                  <CheckIcon />
                  <FeedbackBody>
                    <Verdict>Correct</Verdict>
                    <Paragraphs>
                      <p>p(40 blue and 10 white | draws without replacement) = 1 [this is the only possible outcome when 50 draws are made without replacement]</p>
                      <p>p(40 blue and 10 white | draws with replacement)</p>
                      <p>S = 40</p>
                    </Paragraphs>
                  </FeedbackBody>
                </Feedback>
              </Question>
              <Score>1 / 1 point</Score>
            </QuizColumn>
          </Scroll>
        </Window>

        <DockArea>
          <Wall viewBox="0 0 2880 114" preserveAspectRatio="none" aria-hidden="true">
            <defs>
              <linearGradient id="wall">
                <stop stopColor="#191919" /><stop offset="0.080" stopColor="#262626" /><stop offset="0.180" stopColor="#2e2e30" />
                <stop offset="0.810" stopColor="#101213" /><stop offset="0.900" stopColor="#1a1c20" /><stop offset="0.950" stopColor="#292a32" /><stop offset="1" stopColor="#1c1d22" />
              </linearGradient>
              <linearGradient id="wallShade" x2="0" y2="1">
                <stop stopColor="#000" stopOpacity="0.500" /><stop offset="0.500" stopColor="#000" stopOpacity="0" />
              </linearGradient>
            </defs>
            <rect width="2880" height="114" fill="url(#wall)" />
            <g fill="none" stroke="#0f0f0f">
              <path d="M0 70L110 34L200 2" strokeWidth="3" />
              <path d="M150 26L300 14L430 4" strokeWidth="6" />
              <path d="M118 38L44 114" strokeWidth="4" />
              <path d="M424 4L400 60L378 114" strokeWidth="6" />
              <path d="M390 112L548 100" strokeWidth="5" />
            </g>
            <path d="M106 40L40 114" stroke="#38383a" strokeWidth="3" />
            <rect width="2880" height="114" fill="url(#wallShade)" />
          </Wall>
          <Dock>
            {apps.map(renderApp)}
            <DockDivider />
            {places.map(renderApp)}
          </Dock>
        </DockArea>
      </Desktop>
    </>
  );
}
